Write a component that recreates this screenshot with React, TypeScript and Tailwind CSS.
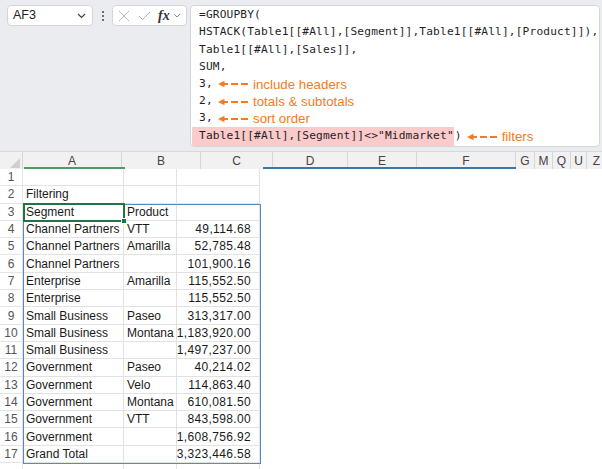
import React from "react";

const CELL_FONT = { fontFamily: '"Liberation Sans", Arial, sans-serif' };
const MONO_FONT = { fontFamily: '"DejaVu Sans Mono", "Liberation Mono", monospace' };

type Row = [string, string, string, string];

const rows: Row[] = [
  ["1", "", "", ""],
  ["2", "Filtering", "", ""],
  ["3", "Segment", "Product", ""],
  ["4", "Channel Partners", "VTT", "49,114.68"],
  ["5", "Channel Partners", "Amarilla", "52,785.48"],
  ["6", "Channel Partners", "", "101,900.16"],
  ["7", "Enterprise", "Amarilla", "115,552.50"],
  ["8", "Enterprise", "", "115,552.50"],
  ["9", "Small Business", "Paseo", "313,317.00"],
  ["10", "Small Business", "Montana", "1,183,920.00"],
  ["11", "Small Business", "", "1,497,237.00"],
  ["12", "Government", "Paseo", "40,214.02"],
  ["13", "Government", "Velo", "114,863.40"],
  ["14", "Government", "Montana", "610,081.50"],
  ["15", "Government", "VTT", "843,598.00"],
  ["16", "Government", "", "1,608,756.92"],
  ["17", "Grand Total", "", "3,323,446.58"],
  ["", "", "", ""],
];

const headers: { label: string; w: string }[] = [
  { label: "A", w: "w-[99px]" },
  { label: "B", w: "w-[79px]" },
  { label: "C", w: "w-[72px]" },
  { label: "D", w: "w-[75px]" },
  { label: "E", w: "w-[69px]" },
  { label: "F", w: "w-[99px]" },
  { label: "G", w: "w-[19px]" },
  { label: "M", w: "w-[18px]" },
  { label: "Q", w: "w-[18px]" },
  { label: "U", w: "w-[16px]" },
  { label: "Z", w: "w-[20px]" },
];

function Arrow() {
  return (
    <svg width="30" height="8" viewBox="0 0 30 8" className="shrink-0">
      <polygon points="0,4 6.5,0.8 6.5,7.2" fill="#f47c20" />
      <rect x="5" y="3" width="5" height="2" fill="#f47c20" />
      <rect x="13" y="3" width="7" height="2" fill="#f47c20" />
      <rect x="23" y="3" width="7" height="2" fill="#f47c20" />
    </svg>
  );
}

function Note({ text }: { text: string }) {
  return (
    <span className="ml-[5px] text-[13.3px] leading-none tracking-normal text-[#f47c20]" style={CELL_FONT}>
      {text}
    </span>
  );
}

function FormulaBar() {
  return (
    <div
      className="ml-[3px] flex h-[142px] w-[410px] flex-col overflow-hidden rounded-[4px] border border-[#d3d5d8] bg-white pt-[1px] text-[11.2px] tracking-[0.15px] text-[#1f1f1f]"
      style={MONO_FONT}
    >
      <div className="flex h-[17.2px] items-center pl-[8px]">=GROUPBY(</div>
      <div className="flex h-[17.2px] items-center whitespace-nowrap pl-[8px]">
        HSTACK(Table1[[#All],[Segment]],Table1[[#All],[Product]]),
      </div>
      <div className="flex h-[17.2px] items-center pl-[8px]">Table1[[#All],[Sales]],</div>
      <div className="flex h-[17.2px] items-center pl-[8px]">SUM,</div>
      <div className="flex h-[17.2px] items-center pl-[8px]">
        <span className="w-[14px]">3,</span>
        <span className="ml-[5px] flex items-center"><Arrow /></span>
        <Note text="include headers" />
      </div>
      <div className="flex h-[17.2px] items-center pl-[8px]">
        <span className="w-[14px]">2,</span>
        <span className="ml-[5px] flex items-center"><Arrow /></span>
        <Note text="totals & subtotals" />
      </div>
      <div className="flex h-[17.2px] items-center pl-[8px]">
        <span className="w-[14px]">3,</span>
        <span className="ml-[5px] flex items-center"><Arrow /></span>
        <Note text="sort order" />
      </div>
      <div className="flex h-[18.6px] items-stretch pl-[1px]">
        <span className="flex items-center whitespace-nowrap bg-[#fbcaca] pl-[7px]">
          Table1[[#All],[Segment]]&lt;&gt;"Midmarket"
        </span>
        <span className="flex items-center pl-[1px]">)</span>
        <span className="ml-[5px] flex items-center"><Arrow /></span>
        <span className="flex items-center"><Note text="filters" /></span>
      </div>
    </div>
  );
}

function TopBar() {
  return (
    <div className="flex h-[151px] shrink-0 items-start bg-[#eaecef] pl-[7px] pt-[5px]">
      <div className="flex h-[21px] w-[86px] items-center justify-between rounded-[4px] border border-[#d3d5d8] bg-white pl-[5px] pr-[6px]">
        <span className="text-[12.5px] text-[#222]" style={CELL_FONT}>AF3</span>
        <svg width="9" height="6" viewBox="0 0 9 6">
          <path d="M1 1 L4.5 4.5 L8 1" fill="none" stroke="#444" strokeWidth="1.2" />
        </svg>
      </div>
      <div className="flex h-[21px] w-[19px] flex-col items-center justify-center gap-[2px]">
        <span className="h-[2px] w-[2px] rounded-full bg-[#444]" />
        <span className="h-[2px] w-[2px] rounded-full bg-[#444]" />
        <span className="h-[2px] w-[2px] rounded-full bg-[#444]" />
      </div>
      <div className="flex h-[21px] w-[75px] items-center rounded-[4px] border border-[#d3d5d8] bg-white pl-[5px]">
        <svg width="12" height="12" viewBox="0 0 12 12">
          <path d="M1 1 L11 11 M11 1 L1 11" stroke="#b5b5b5" strokeWidth="1" />
        </svg>
        <svg width="13" height="10" viewBox="0 0 13 10" className="ml-[8px]">
          <path d="M1 5 L4.5 8.5 L12 1" fill="none" stroke="#b5b5b5" strokeWidth="1" />
        </svg>
        <span
          className="ml-[7px] text-[14px] font-semibold italic leading-none text-[#333]"
          style={{ fontFamily: '"Liberation Serif", "Times New Roman", serif' }}
        >
          fx
        </span>
        <svg width="8" height="6" viewBox="0 0 8 6" className="ml-[3px]">
          <path d="M1 1 L4 4 L7 1" fill="none" stroke="#888" strokeWidth="1" />
        </svg>
      </div>
      <FormulaBar />
    </div>
  );
}

function ColumnHeaders() {
  return (
    <div className="relative flex h-[18px] shrink-0 border-t border-[#d6d8db] bg-[#f1f1f1] text-[12px] text-[#444]" style={CELL_FONT}>
      <div className="relative w-[23px] shrink-0 border-r border-[#d6d6d6]">
        <svg width="10" height="10" viewBox="0 0 10 10" className="absolute bottom-[1px] right-[2px]">
          <polygon points="0,10 10,10 10,0" fill="#cfcfcf" />
        </svg>
      </div>
      {headers.map((h) => (
        <div key={h.label} className={`${h.w} flex shrink-0 items-center justify-center border-r border-[#d6d6d6]`}>
          {h.label}
        </div>
      ))}
      <span className="absolute bottom-0 left-[24px] h-[2px] w-[101px] bg-[#4f9a6b]" />
      <span className="absolute bottom-0 left-[263px] h-[2px] w-[253px] bg-[#3a77a8]" />
    </div>
  );
}

function Grid() {
  return (
    <div className="relative flex flex-col" style={CELL_FONT}>
      {rows.map(([n, a, b, c], i) => (
        <div key={i} className="flex h-[17.3px] shrink-0">
          <div className="flex w-[23px] shrink-0 items-center justify-center border-b border-r border-[#e4e4e4] text-[12px] text-[#555]">
            {n}
          </div>
          <div className="flex w-[101px] shrink-0 items-center overflow-visible whitespace-nowrap border-b border-r border-[#e2e2e2] pl-[3px] text-[12px] text-[#1a1a1a]">
            {a}
          </div>
          <div className="flex w-[53px] shrink-0 items-center whitespace-nowrap border-b border-r border-[#e2e2e2] pl-[3px] text-[12px] text-[#1a1a1a]">
            {b}
          </div>
          <div className="flex w-[83px] shrink-0 items-center justify-end whitespace-nowrap border-b border-r border-[#e2e2e2] pr-[8px] text-[12px] tracking-[0.35px] text-[#1a1a1a]">
            {c}
          </div>
        </div>
      ))}
      <div className="pointer-events-none absolute left-[23px] top-[34.6px] h-[260px] w-[238px] border-[1.5px] border-[#5b87c9]" />
      <div className="pointer-events-none absolute left-[23px] top-[34px] h-[18.6px] w-[102px] border-2 border-[#217346]" />
      <div className="pointer-events-none absolute left-[121px] top-[49px] h-[6px] w-[6px] border border-white bg-[#217346]" />
    </div>
  );
}

export default function App() {
  return (
    <div className="flex h-[469px] w-[602px] flex-col overflow-hidden bg-white">
      <TopBar />
      <ColumnHeaders />
      <Grid />
    </div>
  );
}
